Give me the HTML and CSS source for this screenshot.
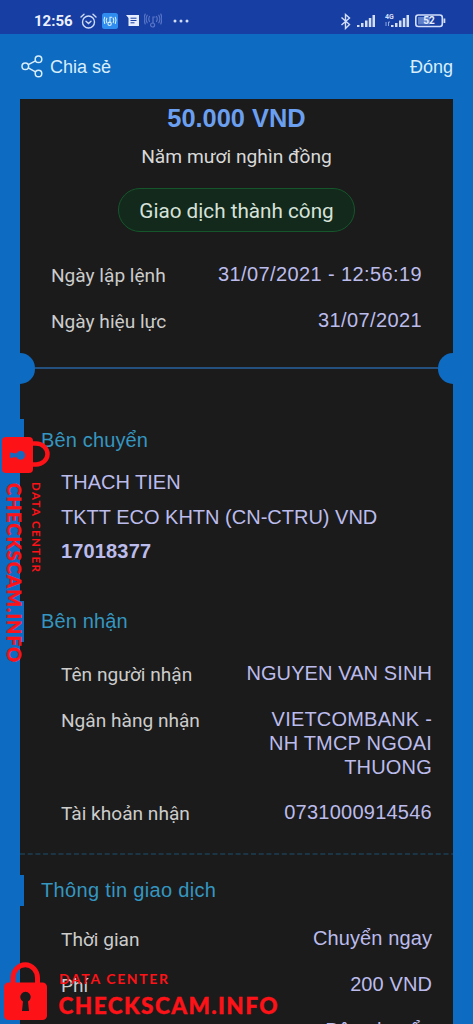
FILE: index.html
```html
<!DOCTYPE html>
<html lang="vi">
<head>
<meta charset="utf-8">
<title>Giao dịch</title>
<link rel="stylesheet" href="styles.css">
</head>
<body>
<div class="screen">
  <div class="status">
    <div class="status-left">
      <span class="clock">12:56</span>
      <svg class="i-alarm" width="17" height="17" viewBox="0 0 17 17" fill="none" stroke="#cfdcf8" stroke-width="1.4" stroke-linecap="round"><circle cx="8.5" cy="9" r="6"/><path d="M1 4 4 1.3M16 4 13 1.3M6 8.3l2.5 2.2 2.5-2.2"/></svg>
      <svg class="i-app" width="16" height="16" viewBox="0 0 16 16"><rect width="16" height="16" rx="2.5" fill="#2f8df0"/><g fill="none" stroke="#d9efff" stroke-width="1.1" stroke-linecap="round"><path d="M4.8 5.2q-1.3 2.2 0 4.4M2.7 4.2q-1.6 3.2 0 6.2M11.2 5.2q1.3 2.2 0 4.4M13.3 4.2q1.6 3.2 0 6.2M8 9V4.2h1.8"/><circle cx="7.6" cy="10.8" r="1.7"/></g></svg>
      <svg class="i-msg" width="13" height="12" viewBox="0 0 13 12"><path d="M0 0h13v11H2.500V3z" fill="#e6edff"/><path d="M4.500 3.200h6M4.500 5.500h6M4.500 7.800h4" stroke="#173fa4" stroke-width="1"/></svg>
      <svg class="i-wave" width="18" height="16" viewBox="0 0 18 16" fill="none" stroke="#5975c8" stroke-width="1.200" stroke-linecap="round"><path d="M5.500 3.500q-1.500 2.500 0 5M3.200 2.200q-2.200 3.800 0 7.600M1.200 1q-2 5 0 10M12.500 3.500q1.500 2.500 0 5M14.800 2.200q2.200 3.800 0 7.600M16.800 1q2 5 0 10M9 10V4h2"/><circle cx="8.600" cy="12" r="2"/></svg>
      <svg class="i-dots" width="16" height="4" viewBox="0 0 16 4" fill="#d3dffa"><circle cx="2" cy="2" r="1.500"/><circle cx="8" cy="2" r="1.500"/><circle cx="14" cy="2" r="1.500"/></svg>
    </div>
    <svg class="status-right" width="106" height="17" viewBox="0 0 106 17">
      <path d="M1.500 4.500 9.500 11.500 5.500 15.500V1.500L9.500 5 1.500 12" fill="none" stroke="#d3dffa" stroke-width="1.400"/>
      <g fill="#d3dffa"><path d="M17 12h2.500v2H17zM21 10h2.500v4H21zM25 7.500h2.500V14H25zM28.800 5h2.500v9h-2.500zM32.500 2H35v12h-2.500z"/><path d="M51 12h2.500v2H51zM55 10h2.500v4H55zM59 7.500h2.500V14H59zM62.800 5h2.500v9h-2.500zM66.500 2H69v12h-2.500z"/></g>
      <text x="45" y="5.500" class="net">4G</text>
      <path d="M46 9v4M48.500 13V9h1.500" stroke="#90a8e0" stroke-width="1" fill="none"/>
      <rect x="75.800" y="2" width="26.500" height="11.500" rx="2.500" fill="none" stroke="#d3dffa" stroke-width="1.600"/>
      <rect x="78" y="4" width="12" height="7.500" fill="#5f7fc9"/>
      <path d="M103.500 5.500h1.800v4.500h-1.800z" fill="#d3dffa"/>
      <text x="89" y="11.300" class="batt" text-anchor="middle">52</text>
    </svg>
  </div>

  <header class="bar">
    <div class="share">
      <svg width="23" height="23" viewBox="0 0 23 23" fill="none" stroke="#d9eefb" stroke-width="1.500"><circle cx="4.300" cy="11.300" r="3.300"/><circle cx="17.500" cy="4.200" r="3.300"/><circle cx="17.500" cy="18.500" r="3.300"/><path d="M7.300 9.700 14.500 5.800M7.300 12.900l7.200 4"/></svg>
      <span>Chia sẻ</span>
    </div>
    <span class="close">Đóng</span>
  </header>

  <main class="card">
    <div class="amount">50.000 VND</div>
    <div class="words">Năm mươi nghìn đồng</div>
    <div class="pill">Giao dịch thành công</div>
    <div class="dates">
      <div class="row"><span class="label">Ngày lập lệnh</span><span class="value date">31/07/2021 - 12:56:19</span></div>
      <div class="row"><span class="label">Ngày hiệu lực</span><span class="value date">31/07/2021</span></div>
    </div>
    <div class="tear"><i class="notch"></i><i class="line"></i><i class="notch end"></i></div>

    <section class="sender">
      <h2>Bên chuyển</h2>
      <div class="lines">
        <div>THACH TIEN</div>
        <div>TKTT ECO KHTN (CN-CTRU) VND</div>
        <div class="acct">17018377</div>
      </div>
    </section>

    <section class="receiver">
      <h2>Bên nhận</h2>
      <div class="rows">
        <div class="row"><span class="label">Tên người nhận</span><span class="value">NGUYEN VAN SINH</span></div>
        <div class="row tall"><span class="label">Ngân hàng nhận</span><span class="value bank">VIETCOMBANK -<br>NH TMCP NGOAI<br>THUONG</span></div>
        <div class="row"><span class="label">Tài khoản nhận</span><span class="value num">0731000914546</span></div>
      </div>
    </section>

    <svg class="dash" width="433" height="2" viewBox="0 0 433 2"><path d="M0 1h433" stroke="#1d5070" stroke-width="1.200" stroke-dasharray="5 2.700"/></svg>

    <section class="info">
      <h2>Thông tin giao dịch</h2>
      <div class="rows">
        <div class="row"><span class="label">Thời gian</span><span class="value">Chuyển ngay</span></div>
        <div class="row"><span class="label">Phí</span><span class="value">200 VND</span></div>
        <div class="row"><span class="label">Người chịu phí</span><span class="value">Bên chuyển</span></div>
      </div>
    </section>
  </main>

  <svg class="mark side" width="56" height="232" viewBox="0 0 56 232">
    <path d="M32 10h4a11.500 10.500 0 0 1 0 21h-4" transform="translate(0 -1.500)" fill="none" stroke="#fd1218" stroke-width="4.500"/>
    <rect x="2" y="2" width="31" height="36" rx="4" fill="#fd1218"/>
    <path d="M10 17.500l6.500 1a4.500 4.500 0 1 1 0 3.500l-6.500 1z" fill="#1769c0"/>
    <g transform="translate(7.300 48) rotate(90)"><text class="brand" textLength="179" font-size="18.500">CHECKSCAM.INFO</text></g>
    <g transform="translate(31.500 47) rotate(90)"><text class="tag" textLength="90" font-size="11.500">DATA CENTER</text></g>
  </svg>

  <svg class="mark foot" width="282" height="64" viewBox="0 0 282 64">
    <path d="M13 24V18a12 13 0 0 1 24.500 0v6" fill="none" stroke="#fd1218" stroke-width="5"/>
    <rect x="4" y="22.500" width="43" height="37.500" rx="4.500" fill="#fd1218"/>
    <path d="M23 41.500a5.200 5.200 0 1 1 5 0l1 9.500h-7z" fill="#1b1b1b"/>
    <text class="tag" x="59" y="24" textLength="109" font-size="14">DATA CENTER</text>
    <text class="brand" x="58.500" y="53.500" textLength="219" font-size="22.500">CHECKSCAM.INFO</text>
  </svg>
</div>
</body>
</html>
```
FILE: styles.css
```css
* { box-sizing: border-box; }
body { margin: 0; background: #0d6bc2; }
.screen {
  position: relative;
  width: 473px;
  height: 1024px;
  overflow: hidden;
  background: #0d6bc2;
  font-family: "Liberation Sans", Arial, sans-serif;
}

/* status bar */
.status {
  height: 34px;
  padding: 8px 27px 0 34px;
  display: flex;
  justify-content: space-between;
  align-items: flex-start;
  background: #173ea2;
}
.status-left { display: flex; align-items: center; height: 26px; }
.clock { width: 46px; font: 700 15px/26px Roboto, sans-serif; color: #edf2ff; }
.i-app { margin-left: 5px; }
.i-msg { margin-left: 8px; }
.i-wave { margin-left: 5px; }
.i-dots { margin-left: 11px; }
.status-right { margin-top: 5px; }
.net { font: 700 7px Roboto, sans-serif; fill: #d3dffa; }
.batt { font: 700 10px Roboto, sans-serif; fill: #e6edff; }

/* title bar */
.bar {
  height: 65px;
  padding: 0 20px 0 21px;
  display: flex;
  justify-content: space-between;
  align-items: center;
  color: #d9eefb;
  font-size: 18px;
  line-height: 24px;
}
.share { display: flex; align-items: center; gap: 6px; }

/* receipt */
.card {
  width: 433px;
  height: 925px;
  margin: 0 20px;
  background: #1b1b1b;
  display: flex;
  flex-direction: column;
  align-items: stretch;
}
.card > * { flex-shrink: 0; }
.amount { height: 38px; text-align: center; font-weight: 700; font-size: 25.4px; line-height: 38px; color: #6b9ff0; }
.words { height: 39px; text-align: center; font: 19.2px/39px Roboto, sans-serif; color: #d8d8d8; }
.pill {
  align-self: center;
  width: 237px;
  height: 44px;
  margin-top: 12px;
  border: 1px solid #15562b;
  border-radius: 22px;
  background: #12291c;
  text-align: center;
  font: 20.7px/44px Roboto, sans-serif;
  color: #d7e2d9;
}
.dates { height: 120px; padding: 20px 31px 0; }
.row { display: flex; justify-content: space-between; height: 46px; }
.row.tall { height: 93px; }
.label { font: 19.1px/48px Roboto, sans-serif; color: #cccccc; }
.value { padding-top: 10px; font-size: 20px; line-height: 24px; letter-spacing: .1px; color: #bcbcec; text-align: right; white-space: nowrap; }
.value.bank { letter-spacing: .2px; }
.value.num { letter-spacing: .25px; }
.value.date { letter-spacing: .4px; }

.tear { display: flex; align-items: center; height: 32px; }
.notch { width: 15px; height: 31px; border-radius: 0 16px 16px 0; background: #0d6bc2; }
.notch.end { border-radius: 16px 0 0 16px; }
.line { flex: 1; height: 2px; background: #245080; }

h2 { margin: 0; padding-left: 17px; border-left: 4px solid #0d6bc2; font-weight: 400; font-size: 20px; letter-spacing: .15px; color: #3596c0; }
.sender { height: 200px; padding-top: 35px; }
.sender h2 { height: 42px; line-height: 42px; }
.lines { padding: 4px 0 0 41px; color: #bcbcec; font-size: 20px; line-height: 34.7px; white-space: nowrap; }
.acct { font-weight: 700; letter-spacing: .15px; }
.receiver { height: 268px; padding-top: 17px; }
.receiver h2 { height: 41px; line-height: 41px; }
.rows { padding: 9px 21px 0 41px; }
.dash { display: block; margin-top: 1px; }
.info { padding-top: 20px; }
.info h2 { height: 31px; line-height: 31px; letter-spacing: .33px; }
.info .rows { padding-top: 10px; }

/* watermark */
.mark { position: absolute; }
.side { left: 0; top: 435px; }
.foot { left: 0; top: 960px; }
.brand { font-family: Lato, sans-serif; font-weight: 900; fill: #fd1218; stroke: #fd1218; stroke-width: .4px; }
.tag { font-family: Lato, sans-serif; font-weight: 700; fill: #fd1218; }
```
